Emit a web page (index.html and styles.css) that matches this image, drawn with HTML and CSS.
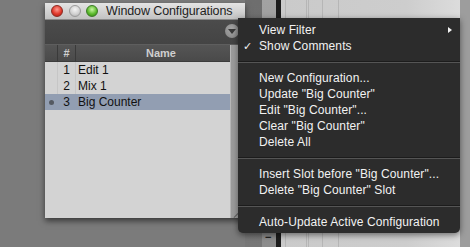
FILE: index.html
```html
<!DOCTYPE html>
<html lang="en">
<head>
    <meta charset="UTF-8">
    <title>Window Configurations</title>
    <link rel="stylesheet" href="styles.css">
</head>
<body>
    <div class="desktop">
        <!-- edit window behind, mostly hidden -->
        <div class="back-window">
            <div class="strip s1"></div>
            <div class="strip s2"><span class="minus">−</span></div>
            <div class="strip s3"></div>
            <div class="strip s4"></div>
            <div class="strip s5"></div>
        </div>

        <div class="window">
            <div class="titlebar">
                <span class="light red"></span>
                <span class="light grey"></span>
                <span class="light green"></span>
                <span class="title">Window Configurations</span>
            </div>
            <div class="toolbar">
                <span class="menu-btn"></span>
            </div>
            <div class="content">
                <div class="list">
                    <div class="head">
                        <span class="c-dot"></span>
                        <span class="c-num">#</span>
                        <span class="c-name">Name</span>
                    </div>
                    <div class="row">
                        <span class="c-dot"></span>
                        <span class="c-num">1</span>
                        <span class="c-name">Edit 1</span>
                    </div>
                    <div class="row">
                        <span class="c-dot"></span>
                        <span class="c-num">2</span>
                        <span class="c-name">Mix 1</span>
                    </div>
                    <div class="row selected">
                        <span class="c-dot"><i class="bullet"></i></span>
                        <span class="c-num">3</span>
                        <span class="c-name">Big Counter</span>
                    </div>
                </div>
                <div class="scroller">
                    <span class="grip"></span>
                </div>
            </div>
        </div>

        <div class="popup">
            <div class="item submenu">View Filter</div>
            <div class="item checked">Show Comments</div>
            <div class="sep"></div>
            <div class="item">New Configuration...</div>
            <div class="item">Update "Big Counter"</div>
            <div class="item">Edit "Big Counter"...</div>
            <div class="item">Clear "Big Counter"</div>
            <div class="item">Delete All</div>
            <div class="sep"></div>
            <div class="item">Insert Slot before "Big Counter"...</div>
            <div class="item">Delete "Big Counter" Slot</div>
            <div class="sep"></div>
            <div class="item">Auto-Update Active Configuration</div>
        </div>
    </div>
</body>
</html>
```

FILE: styles.css
```css
body {
    margin: 0;
    background: #7a7a7a;
    font-family: "Liberation Sans", Arial, sans-serif;
}
.desktop {
    position: relative;
    width: 470px;
    height: 247px;
    overflow: hidden;
    background: #7b7b7b;
}

/* window behind */
.back-window {
    position: absolute;
    left: 245px;
    top: 0;
    width: 225px;
    height: 247px;
    display: flex;
}
.strip {
    height: 100%;
}
.s1 {
    width: 17px;
    background: linear-gradient(#6e6e6e, #777);
}
.s2 {
    width: 14px;
    background: linear-gradient(#a2a2a2, #8c8c8c);
    position: relative;
}
.minus {
    position: absolute;
    left: 3px;
    top: 231px;
    color: #222;
    font-size: 11px;
    font-weight: bold;
}
.s3 {
    width: 5px;
    background: #1c1c1c;
}
.s4 {
    width: 179px;
    background:
        linear-gradient(to right,
            transparent 4px, #b6b6b6 4px, #b6b6b6 5px,
            transparent 5px, transparent 25px, #b6b6b6 25px, #b6b6b6 26px,
            transparent 26px, transparent 27px, #b6b6b6 27px, #b6b6b6 28px,
            transparent 28px, transparent 41px, #b6b6b6 41px, #b6b6b6 42px,
            transparent 42px, transparent 57px, #b6b6b6 57px, #b6b6b6 58px,
            transparent 58px),
        linear-gradient(to right, #cacaca, #cdcdcd 70%, #dcdcdc);
}
.s5 {
    width: 10px;
    background: #9d9d9d;
}

/* configurations window */
.window {
    position: absolute;
    left: 45px;
    top: 3px;
    width: 200px;
    height: 215px;
    display: flex;
    flex-direction: column;
    background: #d2d2d2;
    box-shadow: 0 3px 6px rgba(0, 0, 0, 0.55);
}
.titlebar {
    height: 16px;
    display: flex;
    align-items: center;
    padding-left: 6px;
    background: linear-gradient(#e4e4e4, #c2c2c2);
    border-bottom: 1px solid #8a8a8a;
}
.light {
    width: 12px;
    height: 12px;
    border-radius: 50%;
    margin-right: 6px;
    box-sizing: border-box;
}
.red {
    background: radial-gradient(circle at 50% 35%, #ff9a90, #e0392c 55%, #a61c12);
    border: 1px solid #8c2a22;
}
.grey {
    margin-right: 5px;
    background: radial-gradient(circle at 50% 35%, #f4f4f4, #d2d2d2 55%, #aaa);
    border: 1px solid #9a9a9a;
}
.green {
    background: radial-gradient(circle at 50% 35%, #c9f5a4, #5dbb2e 55%, #2e7d12);
    border: 1px solid #3b7a25;
}
.title {
    margin-left: 2px;
    font-size: 12.5px;
    letter-spacing: -0.1px;
    color: #1e1e1e;
    white-space: nowrap;
}
.toolbar {
    height: 24px;
    background: linear-gradient(#4b4b4b, #444);
    border-bottom: 1px solid #5e5e5e;
    position: relative;
}
.menu-btn {
    position: absolute;
    left: 180px;
    top: 4px;
    width: 14px;
    height: 14px;
    border-radius: 50%;
    background: radial-gradient(circle at 50% 40%, #a8a8a8, #838383);
}
.menu-btn::after {
    content: "";
    position: absolute;
    left: 3px;
    top: 5px;
    border-left: 4px solid transparent;
    border-right: 4px solid transparent;
    border-top: 5px solid #3a3a3a;
}
.content {
    flex: 1;
    display: flex;
}
.list {
    width: 185px;
    background: #d3d3d3;
}
.head {
    height: 16px;
    display: flex;
    align-items: center;
    background: linear-gradient(#555, #4a4a4a);
    border-bottom: 1px solid #3c3c3c;
    color: #cfcfcf;
    font-size: 11px;
    font-weight: bold;
}
.head .c-num {
    border-left: 1px solid #3a3a3a;
    border-right: 1px solid #3a3a3a;
}
.c-dot {
    width: 12px;
    height: 100%;
    display: flex;
    align-items: center;
    justify-content: center;
}
.c-num {
    width: 17px;
    height: 100%;
    display: flex;
    align-items: center;
    justify-content: center;
}
.c-name {
    flex: 1;
    padding-left: 2px;
}
.head .c-name {
    text-align: center;
    padding-left: 16px;
}
.row {
    height: 16px;
    display: flex;
    align-items: center;
    font-size: 12px;
    color: #111;
}
.row .c-num {
    border-left: 1px solid #c6c6c6;
    border-right: 1px solid #c6c6c6;
}
.row.selected {
    background: #929eb2;
}
.row.selected .c-num {
    border-color: transparent;
}
.bullet {
    width: 5px;
    height: 5px;
    border-radius: 50%;
    background: #555a62;
}
.scroller {
    flex: 1;
    background: linear-gradient(to right, #9c9c9c, #adadad);
    border-left: 1px solid #b8b8b8;
    position: relative;
}
.grip {
    position: absolute;
    right: 6px;
    bottom: 2px;
    width: 6px;
    height: 1px;
    background: #666;
    transform: rotate(-45deg);
}

/* popup menu */
.popup {
    position: absolute;
    left: 238px;
    top: 18px;
    width: 222px;
    height: 215px;
    box-sizing: border-box;
    padding-top: 4px;
    background: #2c2c2c;
    border-radius: 0 0 5px 5px;
    box-shadow: 0 2px 6px rgba(0, 0, 0, 0.5);
    color: #f2f2f2;
    font-size: 12px;
}
.item {
    height: 16px;
    line-height: 16px;
    padding-left: 21px;
    position: relative;
    white-space: nowrap;
    letter-spacing: 0.1px;
}
.checked::before {
    content: "✓";
    position: absolute;
    left: 5px;
    top: 1px;
    font-family: "DejaVu Sans", sans-serif;
    font-size: 11px;
}
.submenu::after {
    content: "";
    position: absolute;
    right: 8px;
    top: 5px;
    border-top: 3px solid transparent;
    border-bottom: 3px solid transparent;
    border-left: 4px solid #f2f2f2;
}
.sep {
    height: 16px;
    position: relative;
}
.sep::after {
    content: "";
    position: absolute;
    left: 0;
    right: 0;
    top: 7px;
    height: 1px;
    background: #1c1c1c;
    border-bottom: 1px solid #555;
}
```
